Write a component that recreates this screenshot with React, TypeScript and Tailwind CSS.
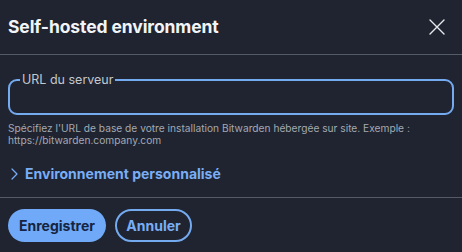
import React from "react";

const font = { fontFamily: "Inter, 'Noto Sans', sans-serif" };

export default function App() {
  return (
    <div className="w-[462px] h-[252px] bg-[#1f2430] text-white flex flex-col overflow-hidden" style={font}>
      <div className="h-[55px] flex items-center justify-between pl-2 pr-[17px] border-b border-[#555b66]">
        <h1 className="text-[17.5px] font-bold tracking-[-0.1px] text-[#f2f4f8]">Self-hosted environment</h1>
        <svg width="16" height="16" viewBox="0 0 16 16" fill="none" stroke="#e6e8ec" strokeWidth="1.4" strokeLinecap="round">
          <path d="M1 1 L15 15 M15 1 L1 15" />
        </svg>
      </div>
      <div className="flex-1 px-2 pt-[19px] flex flex-col">
        <fieldset className="h-[41px] border-2 border-[#74aaf0] rounded-[9px] px-3 mx-0 min-w-0">
          <legend className="px-[2px] text-[12.5px] leading-[12px] text-[#c3c7ce] -ml-[2px]">URL du serveur</legend>
        </fieldset>
        <p className="mt-[7px] text-[10.2px] leading-[12px] text-[#a4a9b2]">
          Spécifiez l'URL de base de votre installation Bitwarden hébergée sur site. Exemple : https://bitwarden.company.com
        </p>
        <div className="mt-[17px] flex items-center gap-[7px] pl-[3px]">
          <svg width="7" height="12" viewBox="0 0 7 12" fill="none" stroke="#79aef6" strokeWidth="1.2" strokeLinecap="round" strokeLinejoin="round">
            <path d="M1 1 L6 6 L1 11" />
          </svg>
          <span className="text-[14px] font-bold text-[#79aef6]">Environnement personnalisé</span>
        </div>
      </div>
      <div className="h-[55px] border-t border-[#555b66] flex items-center gap-[9px] px-2 pt-[1px]">
        <button className="h-[33px] w-[98px] rounded-full bg-[#6fa9f7] text-[#152440] text-[14px] font-bold">Enregistrer</button>
        <button className="h-[33px] w-[77px] rounded-full border-2 border-[#74aaf0] text-[#79aef6] text-[14px] font-bold">Annuler</button>
      </div>
    </div>
  );
}
